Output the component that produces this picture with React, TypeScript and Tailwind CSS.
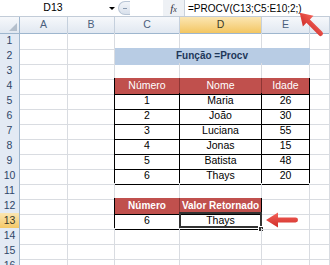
import { twMerge } from "tailwind-merge";

const GRID = "grid grid-cols-[20px_48px_47px_65px_82px_48px_1fr]";
const FONT = { fontFamily: '"Liberation Sans", Arial, sans-serif' };

const people = [
  ["1", "Maria", "26"],
  ["2", "João", "30"],
  ["3", "Luciana", "55"],
  ["4", "Jonas", "15"],
  ["5", "Batista", "48"],
  ["6", "Thays", "20"],
];

function Cell({
  children,
  className = "",
}: {
  children?: React.ReactNode;
  className?: string;
}) {
  return (
    <div
      className={twMerge(
        "relative flex h-full items-center justify-center overflow-visible whitespace-nowrap border-r border-b border-r-[#d9dce1] border-b-[#d9dce1] text-[10.5px] text-black",
        className
      )}
    >
      {children}
    </div>
  );
}

function Row({
  n,
  active,
  children,
}: {
  n: number;
  active?: boolean;
  children?: React.ReactNode;
}) {
  return (
    <div className={`${GRID} h-[15px]`}>
      <div
        className={`flex items-center justify-center border-r border-b border-r-[#9eb6ce] border-b-[#c9d5e4] text-[10.5px] ${
          active
            ? "bg-linear-to-b from-[#fbe6b2] to-[#f3c660] text-[#3a3a2a]"
            : "bg-[#e3eaf4] text-[#2f4668]"
        }`}
      >
        {n}
      </div>
      {children ?? (
        <>
          <Cell />
          <Cell />
          <Cell />
          <Cell />
          <Cell />
          <Cell />
        </>
      )}
    </div>
  );
}

function Arrow() {
  return (
    <>
      <defs>
        <linearGradient id="ar" x1="0" y1="0" x2="0" y2="1">
          <stop offset="0" stopColor="#f4625a" />
          <stop offset="1" stopColor="#cf2d28" />
        </linearGradient>
      </defs>
    </>
  );
}

const arrowPath =
  "M4 20 L16 12.5 L16 17.6 L33.5 17.6 Q36 17.6 36 20 Q36 22.4 33.5 22.4 L16 22.4 L16 27.5 Z";

export default function App() {
  const black = "border-r-black border-b-black";
  return (
    <div className="relative h-[265px] w-[330px] overflow-hidden bg-white" style={FONT}>
      {/* formula bar */}
      <div className="flex h-[17px] border-b border-[#c2ccd8] bg-white">
        <div className="flex w-[106px] items-center justify-center text-[10.5px] text-black">
          D13
        </div>
        <div className="flex w-[11px] items-center justify-center">
          <div className="h-0 w-0 border-x-[3px] border-t-[3px] border-x-transparent border-t-black" />
        </div>
        <div className="ml-px mt-[1px] flex h-[14px] w-[12px] items-center justify-center rounded-l-full border border-r-0 border-[#b9c6d6] bg-linear-to-b from-[#f2f5f9] to-[#d9e1ec]">
          <div className="h-px w-[4px] bg-[#8a9bb0]" />
        </div>
        <div className="w-[33px]" />
        <div
          className="flex w-[22px] items-center justify-center border-r border-[#c9d1db] bg-[#eef1f5] text-[11px] italic text-[#334]"
          style={{ fontFamily: '"Liberation Serif", serif' }}
        >
          f<span className="text-[8px] leading-none mt-[3px]">x</span>
        </div>
        <div className="flex flex-1 items-center pl-[3px] text-[10px] text-black">
          =PROCV(C13;C5:E10;2;)
        </div>
      </div>

      {/* column headers */}
      <div className={`${GRID} h-[16px]`}>
        <div className="relative border-r border-b border-r-[#9eb6ce] border-b-[#9eb6ce] bg-linear-to-b from-[#f6f8fb] to-[#e1e8f1]">
          <svg className="absolute bottom-[2px] right-[2px]" width="8" height="8">
            <path d="M8 0 L8 8 L0 8 Z" fill="#b4bfcc" />
          </svg>
        </div>
        {["A", "B", "C", "D", "E", ""].map((c) => (
          <div
            key={c || "f"}
            className={`flex items-center justify-center border-r border-b border-r-[#c5d0dd] border-b-[#9eb6ce] text-[10.5px] ${
              c === "D"
                ? "bg-linear-to-b from-[#fbe6b2] to-[#f3c660] text-[#3a3a2a]"
                : "bg-linear-to-b from-[#f6f8fb] to-[#e1e8f1] text-[#4a5f7c]"
            }`}
          >
            {c}
          </div>
        ))}
      </div>

      <Row n={1} />
      <Row n={2}>
        <Cell />
        <Cell />
        <Cell className="col-span-3 border-r-[#b8cce4] border-b-[#b8cce4] bg-[#b8cce4] text-[10px] font-bold text-[#1e3759]">
          Função =Procv
        </Cell>
        <Cell />
      </Row>
      <Row n={3} />
      <Row n={4}>
        <Cell />
        <Cell className="border-r-black" />
        <Cell className={`bg-[#c0504d] text-white ${black} border-r-[#8e3634]`}>Número</Cell>
        <Cell className={`bg-[#c0504d] text-white ${black} border-r-[#8e3634]`}>Nome</Cell>
        <Cell className={`bg-[#c0504d] text-white ${black}`}>Idade</Cell>
        <Cell />
      </Row>
      {people.map(([num, nome, idade], i) => (
        <Row key={num} n={5 + i}>
          <Cell />
          <Cell className="border-r-black" />
          <Cell className={black}>{num}</Cell>
          <Cell className={black}>{nome}</Cell>
          <Cell className={black}>{idade}</Cell>
          <Cell />
        </Row>
      ))}
      <Row n={11} />
      <Row n={12}>
        <Cell />
        <Cell className="border-r-black" />
        <Cell className={`bg-[#c0504d] text-[10px] font-bold text-white ${black} border-r-[#8e3634]`}>
          Número
        </Cell>
        <Cell className={`bg-[#c0504d] text-[10px] font-bold text-white ${black}`}>
          Valor Retornado
        </Cell>
        <Cell />
        <Cell />
      </Row>
      <Row n={13} active>
        <Cell />
        <Cell className="border-r-black" />
        <Cell className={black}>6</Cell>
        <Cell className={black}>
          Thays
          <div className="absolute -left-px -top-px h-[16px] w-[83px] border-2 border-[#333]" />
          <div className="absolute -bottom-[3px] -right-[3px] h-[6px] w-[6px] border border-white bg-[#333]" />
        </Cell>
        <Cell />
        <Cell />
      </Row>
      <Row n={14} />
      <Row n={15} />
      <Row n={16} />

      {/* red arrows */}
      <svg className="absolute left-[291px] top-[4px]" width="40" height="40">
        <Arrow />
        <path d={arrowPath} fill="url(#ar)" transform="rotate(45 20 20)" />
      </svg>
      <svg className="absolute left-[262px] top-[200px]" width="40" height="40">
        <path d={arrowPath} fill="url(#ar)" />
      </svg>
    </div>
  );
}
